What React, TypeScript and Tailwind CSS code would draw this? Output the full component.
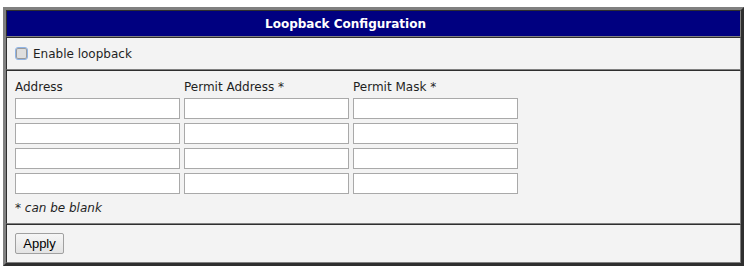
import { useState } from 'react';

const rows = [0, 1, 2, 3];

export default function App() {
  const [enabled, setEnabled] = useState(false);

  return (
    <div className="pt-[7px] pl-[3px] bg-white h-[273px]" style={{ fontFamily: '"DejaVu Sans", Verdana, sans-serif' }}>
      <div className="w-[741px] border-[3px] border-t-[#808080] border-l-[#808080] border-r-[#2e2e2e] border-b-[#2e2e2e] text-[12px] text-[#1f1f1f]">
        {/* header */}
        <div className="h-[27px] border border-t-[#2e2e2e] border-l-[#2e2e2e] border-r-[#808080] border-b-[#808080] bg-[#000080] flex items-center justify-center pr-[56px]">
          <span className="text-white font-bold text-[12px]">Loopback Configuration</span>
        </div>

        {/* enable */}
        <div className="h-[33px] border border-t-[#2e2e2e] border-l-[#2e2e2e] border-r-[#808080] border-b-[#808080] bg-[#f3f3f3] flex items-center pl-[8px]">
          <label className="flex items-center gap-[5px]">
            <input
              type="checkbox"
              checked={enabled}
              onChange={(e) => setEnabled(e.target.checked)}
              className="w-[13px] h-[13px] m-0 appearance-none rounded-[3px] border border-[#8fb4e6] shadow-[inset_0_0_0_1px_#9a9a9a] bg-[#dedede]"
            />
            <span>Enable loopback</span>
          </label>
        </div>

        {/* addresses */}
        <div className="h-[154px] border border-t-[#2e2e2e] border-l-[#2e2e2e] border-r-[#808080] border-b-[#808080] bg-[#f3f3f3] pl-[8px] pt-[8px]">
          <div className="grid grid-cols-[165px_165px_165px] gap-x-[4px] gap-y-[4px]">
            <div className="h-[15px] leading-[15px] pt-[1px]">Address</div>
            <div className="h-[15px] leading-[15px] pt-[1px]">Permit Address *</div>
            <div className="h-[15px] leading-[15px] pt-[1px]">Permit Mask *</div>
            {rows.map((r) => (
              <>
                <input key={`a${r}`} type="text" className="h-[21px] w-[165px] bg-white border border-[#a9a9a9] px-1 outline-none" />
                <input key={`p${r}`} type="text" className="h-[21px] w-[165px] bg-white border border-[#a9a9a9] px-1 outline-none" />
                <input key={`m${r}`} type="text" className="h-[21px] w-[165px] bg-white border border-[#a9a9a9] px-1 outline-none" />
              </>
            ))}
          </div>
          <div className="italic mt-[7px] leading-[15px]">* can be blank</div>
        </div>

        {/* apply */}
        <div className="h-[39px] border border-t-[#2e2e2e] border-l-[#2e2e2e] border-r-[#808080] border-b-[#808080] bg-[#f3f3f3] pl-[8px] pt-[8px]">
          <button
            className="h-[21px] w-[49px] border border-[#a0a0a0] rounded-[2px] bg-[linear-gradient(#f6f6f6,#e3e3e3)] text-[13px] text-black leading-none"
            style={{ fontFamily: '"Liberation Sans", Arial, sans-serif' }}
          >
            Apply
          </button>
        </div>
      </div>
    </div>
  );
}
